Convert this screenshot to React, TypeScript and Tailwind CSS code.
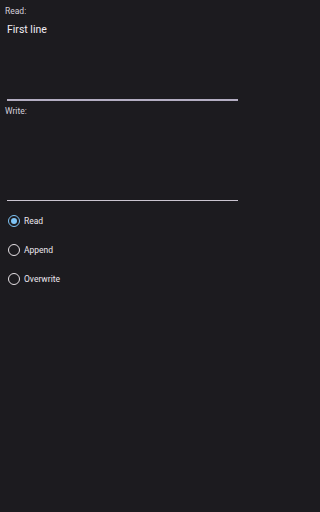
import { useState } from 'react';

type Mode = 'read' | 'append' | 'overwrite';

const modes: { id: Mode; label: string }[] = [
  { id: 'read', label: 'Read' },
  { id: 'append', label: 'Append' },
  { id: 'overwrite', label: 'Overwrite' },
];

export default function App() {
  const [mode, setMode] = useState<Mode>('read');

  return (
    <div className="min-h-[512px] w-full bg-[#1c1b1f] font-['Roboto',sans-serif] text-[#e6e1e5]">
      <div className="w-[245px] pt-[5px]">
        {/* Read */}
        <div className="h-[13px] px-[5px] text-[8.5px] leading-[13px] text-[#d6d1dc]">Read:</div>
        <div className="mx-[7px] box-border h-[83px] border-b-2 border-[#b4aec2] pt-[5px]">
          <p className="text-[10.5px] leading-[14px] text-[#f0ecf2]">First line</p>
        </div>

        {/* Write */}
        <div className="mt-[4px] h-[13px] px-[5px] text-[8.5px] leading-[13px] text-[#d6d1dc]">Write:</div>
        <div className="mx-[7px] box-border h-[83px] border-b border-[#cac4d0]"></div>

        {/* Mode */}
        <div className="mt-[5px] flex flex-col">
          {modes.map((m) => {
            const active = mode === m.id;
            return (
              <button
                key={m.id}
                onClick={() => setMode(m.id)}
                className="flex h-[29px] items-center gap-[4px] pl-[8px] text-left"
              >
                <span
                  className={`flex h-[12px] w-[12px] items-center justify-center rounded-full border-[1.5px] ${
                    active ? 'border-[#7fc4f5]' : 'border-[#e6e1e5]'
                  }`}
                >
                  {active && <span className="h-[6px] w-[6px] rounded-full bg-[#7fc4f5]"></span>}
                </span>
                <span className="text-[8.5px] leading-[12px] text-[#ece8ef]">{m.label}</span>
              </button>
            );
          })}
        </div>
      </div>
    </div>
  );
}
